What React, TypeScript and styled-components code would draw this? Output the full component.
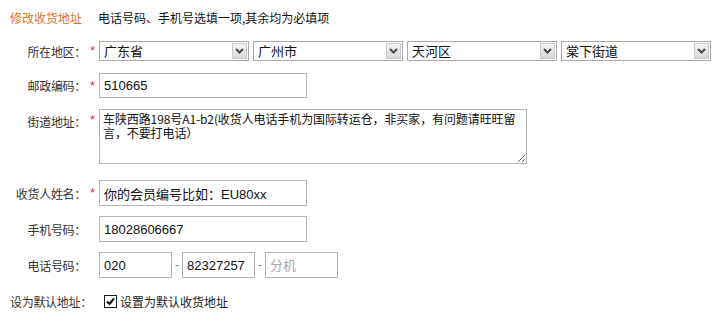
import { useState } from 'react';
import styled, { createGlobalStyle } from 'styled-components';

const GlobalStyle = createGlobalStyle`
  html, body {
    margin: 0;
    padding: 0;
    background: #fff;
  }
  body {
    font-family: "Liberation Sans", "Noto Sans CJK SC", sans-serif;
    font-size: 12px;
    color: #333;
  }
`;

const regions = [
  { value: '广东省', options: ['广东省', '广西省', '湖南省'] },
  { value: '广州市', options: ['广州市', '深圳市', '佛山市'] },
  { value: '天河区', options: ['天河区', '越秀区', '海珠区'] },
  { value: '棠下街道', options: ['棠下街道', '石牌街道', '员村街道'] },
];

export default function App() {
  const [postcode, setPostcode] = useState('510665');
  const [street, setStreet] = useState(
    '车陕西路198号A1-b2(收货人电话手机为国际转运仓，非买家，有问题请旺旺留言，不要打电话）'
  );
  const [name, setName] = useState('你的会员编号比如：EU80xx');
  const [mobile, setMobile] = useState('18028606667');
  const [area, setArea] = useState('020');
  const [tel, setTel] = useState('82327257');
  const [ext, setExt] = useState('');
  const [isDefault, setIsDefault] = useState(true);

  return (
    <Page>
      <GlobalStyle />
      <Header>
        <Title>修改收货地址</Title>
        <Hint>电话号码、手机号选填一项,其余均为必填项</Hint>
      </Header>

      <Row $height={20}>
        <Label>所在地区：</Label>
        <Star>*</Star>
        <Selects>
          {regions.map((r) => (
            <SelectBox key={r.value}>
              <Select defaultValue={r.value}>
                {r.options.map((o) => (
                  <option key={o}>{o}</option>
                ))}
              </Select>
              <Arrow>
                <svg width="9" height="6" viewBox="0 0 9 6">
                  <path d="M1 1 L4.5 4.5 L8 1" fill="none" stroke="#4a4a4a" strokeWidth="2" />
                </svg>
              </Arrow>
            </SelectBox>
          ))}
        </Selects>
      </Row>

      <Row $height={25} $gap={12}>
        <Label>邮政编码：</Label>
        <Star>*</Star>
        <TextInput $width={208} value={postcode} onChange={(e) => setPostcode(e.target.value)} />
      </Row>

      <Row $height={55} $gap={11} $top>
        <Label $pad={4}>街道地址：</Label>
        <Star $pad={4}>*</Star>
        <TextArea value={street} onChange={(e) => setStreet(e.target.value)} />
      </Row>

      <Row $height={26} $gap={16}>
        <Label>收货人姓名：</Label>
        <Star>*</Star>
        <TextInput $width={208} value={name} onChange={(e) => setName(e.target.value)} />
      </Row>

      <Row $height={26} $gap={10}>
        <Label>手机号码：</Label>
        <Star />
        <TextInput $width={208} value={mobile} onChange={(e) => setMobile(e.target.value)} />
      </Row>

      <Row $height={26} $gap={10}>
        <Label>电话号码：</Label>
        <Star />
        <TelGroup>
          <TextInput $width={73} value={area} onChange={(e) => setArea(e.target.value)} />
          <Dash>-</Dash>
          <TextInput $width={73} value={tel} onChange={(e) => setTel(e.target.value)} />
          <Dash>-</Dash>
          <TextInput $width={73} placeholder="分机" value={ext} onChange={(e) => setExt(e.target.value)} />
        </TelGroup>
      </Row>

      <Row $height={16} $gap={15}>
        <DefaultLabel>设为默认地址：</DefaultLabel>
        <CheckLabel>
          <HiddenCheck
            type="checkbox"
            checked={isDefault}
            onChange={(e) => setIsDefault(e.target.checked)}
          />
          <CheckBox>
            {isDefault && (
              <svg width="9" height="9" viewBox="0 0 9 9">
                <path d="M1 4.5 L3.5 7 L8 1.5" fill="none" stroke="#111" strokeWidth="2" />
              </svg>
            )}
          </CheckBox>
          设置为默认收货地址
        </CheckLabel>
      </Row>
    </Page>
  );
}

const Page = styled.div`
  width: 715px;
  height: 325px;
  overflow: hidden;
`;

const Header = styled.div`
  display: flex;
  align-items: center;
  height: 34px;
  padding-left: 10px;
  gap: 16px;
  margin-bottom: 7px;
`;

const Title = styled.span`
  color: #e5731c;
  font-family: "Noto Sans CJK SC", sans-serif;
  font-size: 12px;
`;

const Hint = styled.span`
  color: #111;
  font-family: "Noto Sans CJK SC", sans-serif;
  font-size: 12px;
`;

const Row = styled.div<{ $height: number; $gap?: number; $top?: boolean }>`
  display: flex;
  align-items: ${(p) => (p.$top ? 'flex-start' : 'center')};
  height: ${(p) => p.$height}px;
  margin-top: ${(p) => p.$gap ?? 0}px;
`;

const Label = styled.div<{ $pad?: number }>`
  width: 86px;
  flex: none;
  text-align: right;
  color: #333;
  font-family: "Noto Sans CJK SC", sans-serif;
  font-size: 12px;
  letter-spacing: -0.3px;
  padding-top: ${(p) => p.$pad ?? 0}px;
  white-space: nowrap;
`;

const Star = styled.div<{ $pad?: number }>`
  width: 13px;
  flex: none;
  color: #d0273a;
  font-size: 12px;
  text-align: center;
  padding-top: ${(p) => p.$pad ?? 0}px;
`;

const Selects = styled.div`
  display: flex;
  gap: 4px;
`;

const SelectBox = styled.div`
  position: relative;
  width: 150px;
  height: 20px;
`;

const Select = styled.select`
  appearance: none;
  width: 100%;
  height: 100%;
  box-sizing: border-box;
  border: 1px solid #a9a9a9;
  border-radius: 0;
  background: #fff;
  padding: 0 20px 0 4px;
  font-family: "Liberation Sans", "Noto Sans CJK SC", sans-serif;
  font-size: 13px;
  color: #111;
  outline: none;
`;

const Arrow = styled.span`
  position: absolute;
  top: 2px;
  right: 2px;
  width: 15px;
  height: 16px;
  box-sizing: border-box;
  border: 1px solid #c9c9c9;
  background: linear-gradient(#f2f2f2, #d9d9d9);
  display: flex;
  align-items: center;
  justify-content: center;
  pointer-events: none;
`;

const TextInput = styled.input<{ $width: number }>`
  width: ${(p) => p.$width}px;
  height: 100%;
  box-sizing: border-box;
  border: 1px solid #b4b4b4;
  border-radius: 0;
  padding: 0 4px;
  font-family: "Liberation Sans", "Noto Sans CJK SC", sans-serif;
  font-size: 13px;
  color: #111;
  outline: none;
  &::placeholder {
    color: #aaa;
  }
`;

const TextArea = styled.textarea`
  width: 428px;
  height: 55px;
  box-sizing: border-box;
  border: 1px solid #b4b4b4;
  border-radius: 0;
  padding: 2px 3px;
  font-family: "Noto Sans CJK SC", sans-serif;
  font-size: 12px;
  line-height: 14px;
  letter-spacing: -0.1px;
  color: #111;
  resize: both;
  outline: none;
`;

const TelGroup = styled.div`
  display: flex;
  align-items: center;
  height: 100%;
`;

const Dash = styled.span`
  width: 10px;
  text-align: center;
  color: #888;
  font-size: 12px;
`;

const DefaultLabel = styled.div`
  width: 94px;
  flex: none;
  padding-left: 10px;
  color: #333;
  font-family: "Noto Sans CJK SC", sans-serif;
  font-size: 12px;
  letter-spacing: -0.3px;
  white-space: nowrap;
`;

const CheckLabel = styled.label`
  display: flex;
  align-items: center;
  gap: 3px;
  color: #222;
  font-family: "Noto Sans CJK SC", sans-serif;
  font-size: 12px;
  cursor: pointer;
`;

const HiddenCheck = styled.input`
  display: none;
`;

const CheckBox = styled.span`
  width: 13px;
  height: 13px;
  box-sizing: border-box;
  border: 1px solid #1c1c1c;
  background: #fff;
  display: flex;
  align-items: center;
  justify-content: center;
`;
